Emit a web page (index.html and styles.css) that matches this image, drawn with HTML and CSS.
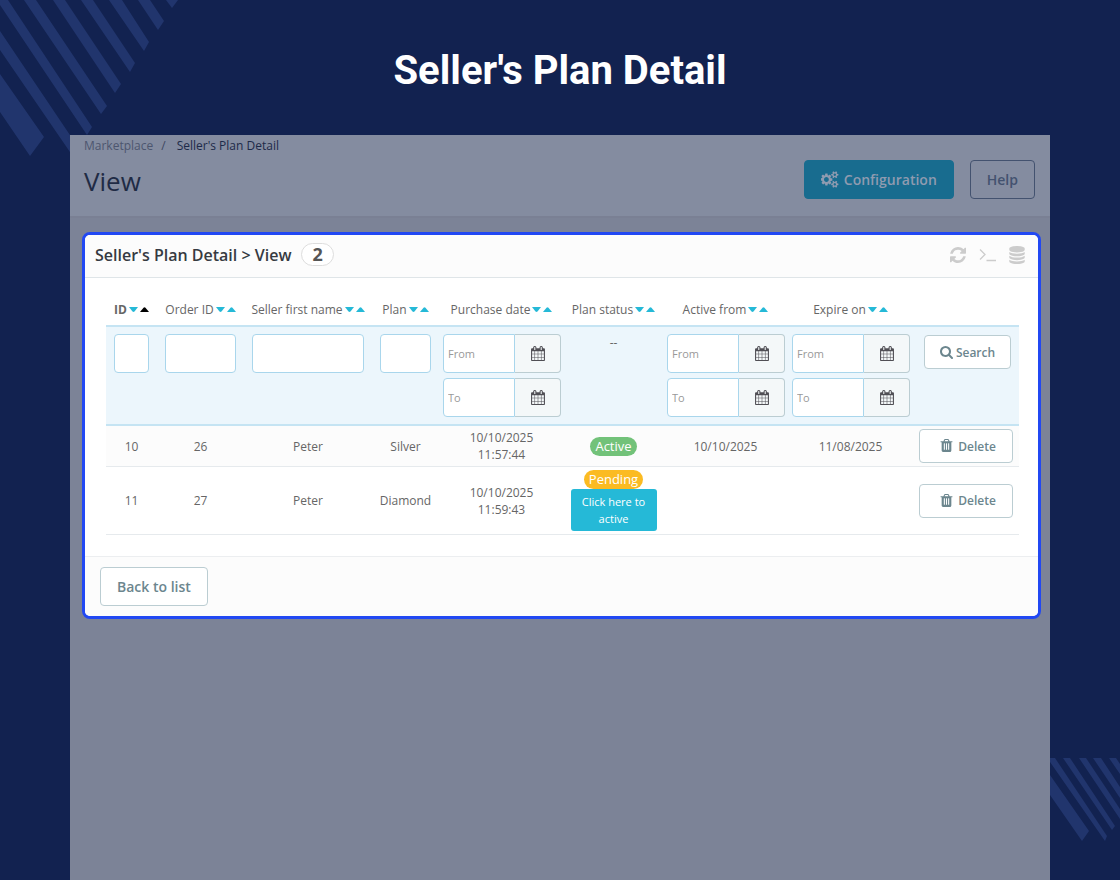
FILE: index.html
```html
<!DOCTYPE html>
<html lang="en">
<head>
<meta charset="utf-8">
<meta name="viewport" content="width=device-width, initial-scale=1">
<title>Seller's Plan Detail</title>
<link rel="stylesheet" href="styles.css">
</head>
<body>
<svg class="symbols" aria-hidden="true">
  <symbol id="i-cogs" viewBox="0 0 1920 1792"><path d="M832 896q0-106-75-181t-181-75-181 75-75 181 75 181 181 75 181-75 75-181zm768 512q0-52-38-90t-90-38-90 38-38 90q0 53 37.500 90.500t90.500 37.500 90.500-37.500 37.500-90.500zm0-1024q0-52-38-90t-90-38-90 38-38 90q0 53 37.500 90.500t90.500 37.500 90.500-37.500 37.500-90.500zm-384 421v185q0 10-7 19.500t-16 10.500l-155 24q-11 35-32 76 34 48 90 115 7 11 7 20 0 12-7 19-23 30-82.500 89.500t-78.500 59.500q-11 0-21-7l-115-90q-37 19-77 31-11 108-23 155-7 24-30 24h-186q-11 0-20-7.500t-10-17.500l-23-153q-34-10-75-31l-118 89q-7 7-20 7-11 0-21-8-144-133-144-160 0-9 7-19 10-14 41-53t47-61q-23-44-35-82l-152-24q-10-1-17-9.500t-7-19.500v-185q0-10 7-19.500t16-10.500l155-24q11-35 32-76-34-48-90-115-7-11-7-20 0-12 7-20 22-30 82-89t79-59q11 0 21 7l115 90q34-18 77-32 11-108 23-154 7-24 30-24h186q11 0 20 7.500t10 17.500l23 153q34 10 75 31l118-89q8-7 20-7 11 0 21 8 144 133 144 160 0 8-7 19-12 16-42 54t-45 60q23 48 34 82l152 23q10 2 17 10.500t7 19.500zm640 533v140q0 16-149 31-12 27-30 52 51 113 51 138 0 4-4 7-122 71-124 71-8 0-46-47t-52-68q-20 2-30 2t-30-2q-14 21-52 68t-46 47q-2 0-124-71-4-3-4-7 0-25 51-138-18-25-30-52-149-15-149-31v-140q0-16 149-31 13-29 30-52-51-113-51-138 0-4 4-7 4-2 35-20t59-34 30-16q8 0 46 46.500t52 67.500q20-2 30-2t30 2q51-71 92-112l6-2q4 0 124 70 4 3 4 7 0 25-51 138 17 23 30 52 149 15 149 31zm0-1024v140q0 16-149 31-12 27-30 52 51 113 51 138 0 4-4 7-122 71-124 71-8 0-46-47t-52-68q-20 2-30 2t-30-2q-14 21-52 68t-46 47q-2 0-124-71-4-3-4-7 0-25 51-138-18-25-30-52-149-15-149-31v-140q0-16 149-31 13-29 30-52-51-113-51-138 0-4 4-7 4-2 35-20t59-34 30-16q8 0 46 46.500t52 67.500q20-2 30-2t30 2q51-71 92-112l6-2q4 0 124 70 4 3 4 7 0 25-51 138 17 23 30 52 149 15 149 31z"/></symbol>
  <symbol id="i-refresh" viewBox="0 128 1536 1536"><path d="M1511 1056q0 5-1 7-64 268-268 434.500t-478 166.500q-146 0-282.500-55t-243.500-157l-129 129q-19 19-45 19t-45-19-19-45v-448q0-26 19-45t45-19h448q26 0 45 19t19 45-19 45l-137 137q71 66 161 102t187 36q134 0 250-65t186-179q11-17 53-117 8-23 30-23h192q13 0 22.500 9.500t9.500 22.500zm25-800v448q0 26-19 45t-45 19h-448q-26 0-45-19t-19-45 19-45l138-138q-148-137-349-137-134 0-250 65t-186 179q-11 17-53 117-8 23-30 23h-199q-13 0-22.500-9.500t-9.500-22.500v-7q65-268 270-434.500t480-166.500q146 0 284 55.500t245 156.500l130-129q19-19 45-19t45 19 19 45z"/></symbol>
  <symbol id="i-terminal" viewBox="0 0 17 14"><path d="M1 1.500 6 6.500 1 11.500M7.500 12.500H17" fill="none" stroke="currentColor" stroke-width="1.300"/></symbol>
  <symbol id="i-database" viewBox="0 0 1536 1792"><path d="M768 768q237 0 443-43t325-127v170q0 69-103 128t-280 93.500-385 34.500-385-34.500-280-93.500-103-128v-170q119 84 325 127t443 43zm0 768q237 0 443-43t325-127v170q0 69-103 128t-280 93.500-385 34.500-385-34.500-280-93.500-103-128v-170q119 84 325 127t443 43zm0-384q237 0 443-43t325-127v170q0 69-103 128t-280 93.500-385 34.500-385-34.500-280-93.500-103-128v-170q119 84 325 127t443 43zm0-1152q208 0 385 34.500t280 93.500 103 128v128q0 69-103 128t-280 93.500-385 34.500-385-34.500-280-93.500-103-128v-128q0-69 103-128t280-93.500 385-34.500z"/></symbol>
  <symbol id="i-search" viewBox="0 128 1664 1664"><path d="M1152 832q0-185-131.500-316.500t-316.500-131.500-316.500 131.500-131.500 316.500 131.500 316.500 316.500 131.500 316.500-131.500 131.500-316.500zm512 832q0 52-38 90t-90 38q-54 0-90-38l-343-342q-179 124-399 124-143 0-273.500-55.500t-225-150-150-225-55.500-273.500 55.500-273.500 150-225 225-150 273.500-55.500 273.500 55.500 225 150 150 225 55.500 273.500q0 220-124 399l343 343q37 37 37 90z"/></symbol>
  <symbol id="i-calendar" viewBox="0 0 1664 1792"><path d="M128 1664h288v-288h-288v288zm352 0h320v-288h-320v288zm-352-352h288v-320h-288v320zm352 0h320v-320h-320v320zm-352-384h288v-288h-288v288zm736 736h320v-288h-320v288zm-384-736h320v-288h-320v288zm768 736h288v-288h-288v288zm-384-352h320v-320h-320v320zm-352-864v-288q0-13-9.500-22.500t-22.500-9.500h-64q-13 0-22.500 9.500t-9.500 22.500v288q0 13 9.500 22.500t22.500 9.500h64q13 0 22.500-9.500t9.500-22.500zm736 864h288v-320h-288v320zm-384-384h320v-288h-320v288zm384 0h288v-288h-288v288zm32-480v-288q0-13-9.500-22.500t-22.500-9.500h-64q-13 0-22.500 9.500t-9.500 22.500v288q0 13 9.500 22.500t22.500 9.500h64q13 0 22.500-9.500t9.500-22.500zm384-64v1280q0 52-38 90t-90 38h-1408q-52 0-90-38t-38-90v-1280q0-52 38-90t90-38h128v-96q0-66 47-113t113-47h64q66 0 113 47t47 113v96h384v-96q0-66 47-113t113-47h64q66 0 113 47t47 113v96h128q52 0 90 38t38 90z"/></symbol>
  <symbol id="i-trash" viewBox="0 128 1408 1664"><path d="M512 1376v-704q0-14-9-23t-23-9h-64q-14 0-23 9t-9 23v704q0 14 9 23t23 9h64q14 0 23-9t9-23zm256 0v-704q0-14-9-23t-23-9h-64q-14 0-23 9t-9 23v704q0 14 9 23t23 9h64q14 0 23-9t9-23zm256 0v-704q0-14-9-23t-23-9h-64q-14 0-23 9t-9 23v704q0 14 9 23t23 9h64q14 0 23-9t9-23zm-544-992h448l-48-117q-7-9-17-11h-317q-10 2-17 11zm928 32v64q0 14-9 23t-23 9h-96v948q0 83-47 143.500t-113 60.500h-832q-66 0-113-58.500t-47-141.500v-952h-96q-14 0-23-9t-9-23v-64q0-14 9-23t23-9h309l70-167q15-37 54-63t79-26h320q40 0 79 26t54 63l70 167h309q14 0 23 9t9 23z"/></symbol>
  <symbol id="i-down" viewBox="0 0 9 5"><path d="M0 0H9L5.500 4.500Q4.500 5.300 3.500 4.500Z"/></symbol>
  <symbol id="i-up" viewBox="0 0 9 5"><path d="M0 5H9L5.500 .7Q4.500-.3 3.500 .7Z"/></symbol>
</svg>

<div class="slide">
  <svg class="stripes stripes-top" viewBox="0 0 180 160" aria-hidden="true">
    <path d="M0 74 44 137 30 156 0 112ZM0 31 78 147 72 155 0 50ZM0 0H8L92 127 87 135 0 5ZM24 0H36L107 106 101 114ZM53 0H65L121 84 115 93ZM81 0H93L135 63 130 72ZM109 0H122L149 42 144 51ZM138 0H150L164 21 158 30ZM166 0H178L172 8Z"/>
  </svg>
  <svg class="stripes stripes-bottom" viewBox="0 0 70 122" aria-hidden="true">
    <path d="M0 17 39 73 32 83 0 37ZM0 0H5L57 78 55 83 0 4ZM13 0H20L65 68 62 72ZM29 0H36L70 51V61ZM43 0H51L70 29V40ZM59 0H66L70 6V16Z"/>
  </svg>

  <h1 class="slide-title">Seller's Plan Detail</h1>

  <main class="app">
    <header class="page-head">
      <nav class="breadcrumb" aria-label="Breadcrumb">
        <a class="crumb" href="#">Marketplace</a><span class="crumb-sep">/</span><a class="crumb crumb-current" href="#">Seller's Plan Detail</a>
      </nav>
      <div class="page-bar">
        <h2 class="page-title">View</h2>
        <div class="page-actions">
          <button class="btn-head btn-config" type="button"><svg class="icon-cogs" aria-hidden="true"><use href="#i-cogs"/></svg>Configuration</button>
          <button class="btn-head btn-help" type="button">Help</button>
        </div>
      </div>
    </header>

    <section class="panel">
      <header class="panel-head">
        <h3 class="panel-title">Seller's Plan Detail &gt; View</h3>
        <span class="count">2</span>
        <div class="tools">
          <button class="tool" type="button" aria-label="Refresh list"><svg class="icon-refresh" aria-hidden="true"><use href="#i-refresh"/></svg></button>
          <button class="tool" type="button" aria-label="Show SQL query"><svg class="icon-terminal" aria-hidden="true"><use href="#i-terminal"/></svg></button>
          <button class="tool" type="button" aria-label="Export to SQL manager"><svg class="icon-database" aria-hidden="true"><use href="#i-database"/></svg></button>
        </div>
      </header>

      <div class="panel-body">
        <table class="plans">
          <colgroup><col class="c-id"><col class="c-order"><col class="c-name"><col class="c-plan"><col class="c-bought"><col class="c-status"><col class="c-date"><col class="c-date"><col class="c-action"></colgroup>
          <thead>
            <tr class="heads">
              <th><span class="sort"><b>ID</b><a href="#" aria-label="Sort ID descending"><svg class="arrow"><use href="#i-down"/></svg></a><a class="sorted" href="#" aria-label="Sort ID ascending"><svg class="arrow"><use href="#i-up"/></svg></a></span></th>
              <th><span class="sort">Order ID<a href="#" aria-label="Sort order descending"><svg class="arrow"><use href="#i-down"/></svg></a><a href="#" aria-label="Sort order ascending"><svg class="arrow"><use href="#i-up"/></svg></a></span></th>
              <th><span class="sort">Seller first name<a href="#" aria-label="Sort name descending"><svg class="arrow"><use href="#i-down"/></svg></a><a href="#" aria-label="Sort name ascending"><svg class="arrow"><use href="#i-up"/></svg></a></span></th>
              <th><span class="sort">Plan<a href="#" aria-label="Sort plan descending"><svg class="arrow"><use href="#i-down"/></svg></a><a href="#" aria-label="Sort plan ascending"><svg class="arrow"><use href="#i-up"/></svg></a></span></th>
              <th><span class="sort">Purchase date<a href="#" aria-label="Sort purchase date descending"><svg class="arrow"><use href="#i-down"/></svg></a><a href="#" aria-label="Sort purchase date ascending"><svg class="arrow"><use href="#i-up"/></svg></a></span></th>
              <th><span class="sort">Plan status<a href="#" aria-label="Sort status descending"><svg class="arrow"><use href="#i-down"/></svg></a><a href="#" aria-label="Sort status ascending"><svg class="arrow"><use href="#i-up"/></svg></a></span></th>
              <th><span class="sort">Active from<a href="#" aria-label="Sort active from descending"><svg class="arrow"><use href="#i-down"/></svg></a><a href="#" aria-label="Sort active from ascending"><svg class="arrow"><use href="#i-up"/></svg></a></span></th>
              <th><span class="sort">Expire on<a href="#" aria-label="Sort expiry descending"><svg class="arrow"><use href="#i-down"/></svg></a><a href="#" aria-label="Sort expiry ascending"><svg class="arrow"><use href="#i-up"/></svg></a></span></th>
              <th></th>
            </tr>
            <tr class="filters">
              <td><input class="field" type="text" aria-label="ID"></td>
              <td><input class="field" type="text" aria-label="Order ID"></td>
              <td><input class="field" type="text" aria-label="Seller first name"></td>
              <td><input class="field" type="text" aria-label="Plan"></td>
              <td class="range">
                <div class="date"><input type="text" placeholder="From" aria-label="Purchase date from"><button type="button" aria-label="Pick date"><svg class="icon-calendar"><use href="#i-calendar"/></svg></button></div>
                <div class="date"><input type="text" placeholder="To" aria-label="Purchase date to"><button type="button" aria-label="Pick date"><svg class="icon-calendar"><use href="#i-calendar"/></svg></button></div>
              </td>
              <td>--</td>
              <td class="range">
                <div class="date"><input type="text" placeholder="From" aria-label="Active from, from"><button type="button" aria-label="Pick date"><svg class="icon-calendar"><use href="#i-calendar"/></svg></button></div>
                <div class="date"><input type="text" placeholder="To" aria-label="Active from, to"><button type="button" aria-label="Pick date"><svg class="icon-calendar"><use href="#i-calendar"/></svg></button></div>
              </td>
              <td class="range">
                <div class="date"><input type="text" placeholder="From" aria-label="Expire on, from"><button type="button" aria-label="Pick date"><svg class="icon-calendar"><use href="#i-calendar"/></svg></button></div>
                <div class="date"><input type="text" placeholder="To" aria-label="Expire on, to"><button type="button" aria-label="Pick date"><svg class="icon-calendar"><use href="#i-calendar"/></svg></button></div>
              </td>
              <td class="search-cell"><button class="btn-row btn-search" type="button"><svg class="icon-search" aria-hidden="true"><use href="#i-search"/></svg>Search</button></td>
            </tr>
          </thead>
          <tbody>
            <tr class="odd">
              <td>10</td><td>26</td><td>Peter</td><td>Silver</td>
              <td>10/10/2025<br>11:57:44</td>
              <td><span class="badge badge-active">Active</span></td>
              <td>10/10/2025</td><td>11/08/2025</td>
              <td><button class="btn-row btn-delete" type="button"><svg class="icon-trash" aria-hidden="true"><use href="#i-trash"/></svg>Delete</button></td>
            </tr>
            <tr>
              <td>11</td><td>27</td><td>Peter</td><td>Diamond</td>
              <td>10/10/2025<br>11:59:43</td>
              <td><div class="status"><span class="badge badge-pending">Pending</span><button class="activate" type="button">Click here to active</button></div></td>
              <td></td><td></td>
              <td><button class="btn-row btn-delete" type="button"><svg class="icon-trash" aria-hidden="true"><use href="#i-trash"/></svg>Delete</button></td>
            </tr>
          </tbody>
        </table>
      </div>

      <footer class="panel-foot">
        <button class="btn-back" type="button">Back to list</button>
      </footer>
    </section>
  </main>
</div>
</body>
</html>
```
FILE: styles.css
```css
* { box-sizing: border-box; }
body {
  margin: 0;
  background: #122250;
  color: #666;
  font: 12px/17px "Open Sans", "Noto Sans", sans-serif;
}
h1, h2, h3 { margin: 0; }
a { text-decoration: none; color: inherit; }
button, input { font: inherit; margin: 0; }
button { cursor: pointer; }
svg { display: block; flex: none; fill: currentColor; }
.symbols { display: none; }

.slide {
  position: relative;
  display: flex;
  flex-direction: column;
  min-height: 100vh;
  padding: 0 70px;
}
.stripes { position: absolute; fill: #21356d; }
.stripes-top { top: 0; left: 0; width: 180px; height: 160px; }
.stripes-bottom { right: 0; bottom: 0; width: 70px; height: 122px; }
.slide-title {
  position: relative;
  padding: 48px 0 41px;
  color: #fff;
  font: 700 40px/46px Roboto, sans-serif;
  text-align: center;
}

.app { position: relative; flex: 1; background: #7c8397; }

.page-head {
  padding: 3px 15px 17px 14px;
  background: #848ca0;
  border-bottom: 2px solid #7a8094;
}
.breadcrumb { display: flex; line-height: 16px; color: #3e4860; }
.crumb { color: #4d566f; }
.crumb-sep { padding: 0 11px 0 8px; }
.crumb-current { color: #1d2a49; }
.page-bar {
  display: flex;
  align-items: flex-end;
  justify-content: space-between;
  margin-top: 6px;
}
.page-title { color: #1f2b45; font-weight: 400; font-size: 26px; line-height: 36px; }
.page-actions { display: flex; gap: 16px; }
.btn-head {
  display: flex;
  align-items: center;
  gap: 5px;
  height: 39px;
  padding: 0 16px;
  border: 1px solid #43526f;
  border-radius: 4px;
  background: none;
  color: #43526f;
  font-weight: 600;
  font-size: 14px;
}
.btn-config { border-color: #186c8f; background: #186c8f; color: #8f9bb0; }
.icon-cogs { width: 18px; height: 17px; }

.panel {
  margin: 14px 9px 0 12px;
  overflow: hidden;
  border: 3px solid #2148f3;
  border-radius: 8px;
  background: #fff;
}
.panel-head {
  display: flex;
  align-items: center;
  height: 43px;
  padding: 0 13px 3px 10px;
  background: #fcfcfc;
  border-bottom: 1px solid #dfe5e8;
}
.panel-title { color: #363a41; font-weight: 600; font-size: 16px; line-height: 22px; }
.count {
  margin-left: 10px;
  padding: 0 10px;
  border: 1px solid #ddd;
  border-radius: 12px;
  background: #fff;
  color: #555;
  font-weight: 700;
  font-size: 18px;
  line-height: 21px;
}
.tools { display: flex; align-items: center; gap: 13px; margin-left: auto; color: #ccc; }
.tool { padding: 0; border: 0; background: none; color: inherit; }
.icon-refresh { width: 16px; height: 16px; }
.icon-terminal { width: 17px; height: 14px; }
.icon-database { width: 16px; height: 18px; }

.panel-body { padding: 15px 19px 21px 21px; }
.plans { width: 100%; table-layout: fixed; border-collapse: separate; border-spacing: 0; text-align: center; }
.c-id { width: 51px; }
.c-order { width: 87px; }
.c-name { width: 128px; }
.c-plan { width: 67px; }
.c-bought { width: 125px; }
.c-status { width: 99px; }
.c-date { width: 125px; }
.c-action { width: 106px; }
.plans th, .plans td { padding: 3px 0; }
.plans .heads th { height: 34px; padding: 0; border-bottom: 2px solid #c5e4f3; font-weight: 400; white-space: nowrap; }
.sort { display: inline-flex; align-items: center; gap: 2px; }
.sort a { color: #25b9d7; }
.sort .sorted { color: #000; }
.sort b { font-weight: 700; }
.arrow { width: 9px; height: 5px; }

.plans .filters td { height: 99px; padding: 7px 8px; background: #ecf6fc; border-bottom: 2px solid #c5e4f3; vertical-align: top; }
.plans .filters .range { padding: 7px 3px 7px 4px; }
.field {
  display: block;
  width: 100%;
  height: 39px;
  padding: 0 4px;
  border: 1px solid #a9d6ec;
  border-radius: 4px;
  background: #fff;
}
.date { display: flex; height: 39px; }
.date + .date { margin-top: 5px; }
.date input {
  flex: 1;
  min-width: 0;
  padding: 0 4px;
  border: 1px solid #a9d6ec;
  border-radius: 4px 0 0 4px;
  background: #fff;
  font-size: 11px;
}
.date input::placeholder { color: #999; opacity: 1; }
.date button {
  display: flex;
  align-items: center;
  justify-content: center;
  width: 46px;
  padding: 0;
  border: 1px solid #bbcdd2;
  border-left: 0;
  border-radius: 0 4px 4px 0;
  background: #f4f8f9;
  color: #504f55;
}
.icon-calendar { width: 14px; height: 15px; }

.plans tbody td { border-bottom: 1px solid #e6eaed; vertical-align: middle; }
.plans .odd td { background: #fcfcfc; }

.btn-row {
  display: inline-flex;
  align-items: center;
  height: 34px;
  border: 1px solid #bbcdd2;
  border-radius: 4px;
  background: #fff;
  color: #6c868e;
  font-weight: 600;
  vertical-align: top;
}
.plans .filters .search-cell { padding: 8px 4px 6px 7px; }
.btn-search { gap: 3px; padding: 0 15px; }
.btn-delete { gap: 5px; padding: 0 16px 0 20px; }
.icon-search { width: 13px; height: 13px; }
.icon-trash { width: 13px; height: 14px; }

.badge {
  display: inline-block;
  padding: 0 5px;
  border-radius: 10px;
  color: #fff;
  font-size: 13px;
  line-height: 19px;
  vertical-align: top;
}
.badge-active { background: #72c279; }
.badge-pending { background: #fbbb22; }
.status { display: flex; flex-direction: column; align-items: center; }
.activate {
  width: 86px;
  padding: 4px 8px;
  border: 0;
  border-radius: 3px;
  background: #25b9d7;
  color: #fff;
  font-size: 11px;
  line-height: 17px;
}

.panel-foot { padding: 10px 15px; background: #fcfcfc; border-top: 1px solid #eceef0; }
.btn-back {
  height: 39px;
  padding: 0 16px;
  border: 1px solid #bbcdd2;
  border-radius: 4px;
  background: #fff;
  color: #6c868e;
  font-weight: 600;
  font-size: 14px;
}
```
